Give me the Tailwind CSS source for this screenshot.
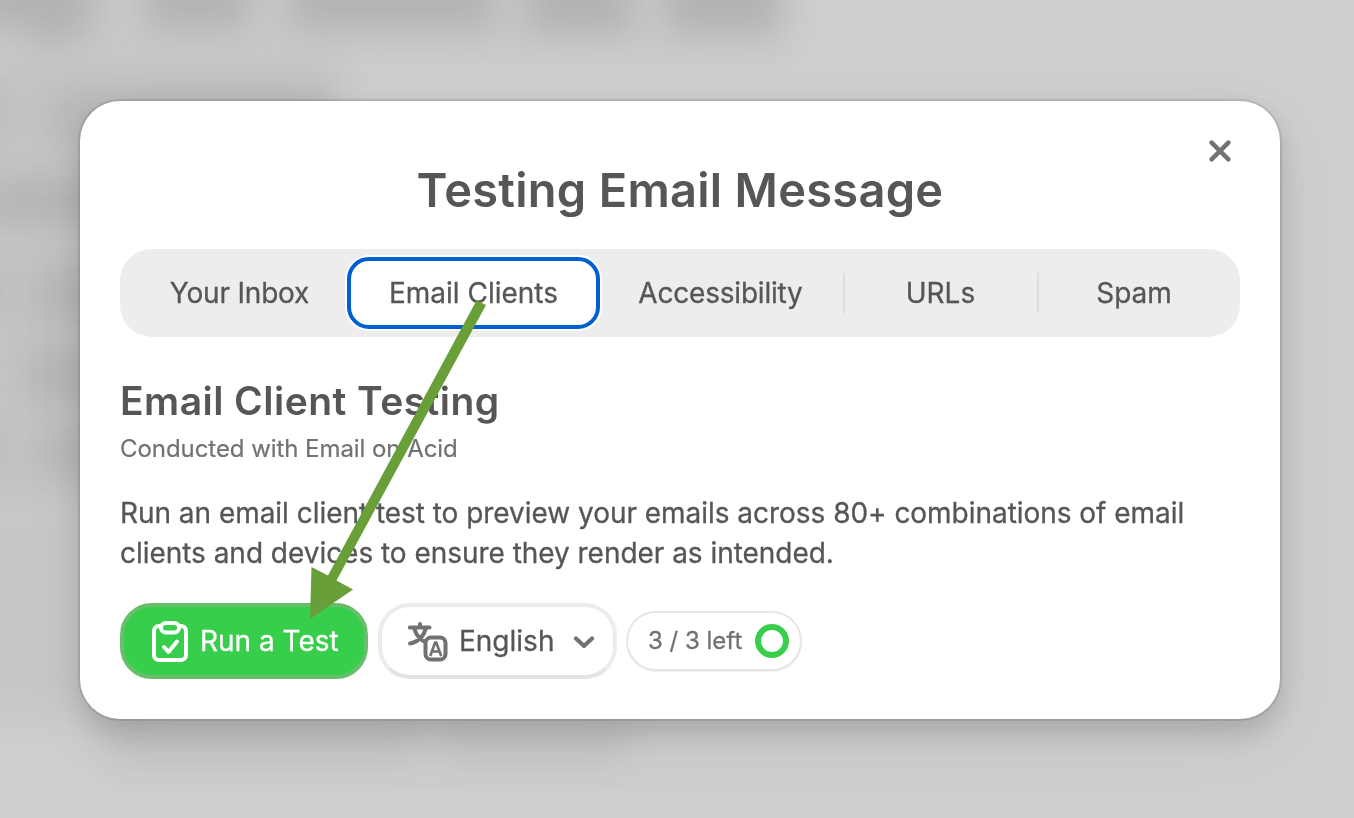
<!DOCTYPE html>
<html lang="en">
<head>
<meta charset="utf-8">
<title>Testing Email Message</title>
<script src="https://cdn.jsdelivr.net/npm/@tailwindcss/browser@4"></script>
</head>
<body class="relative h-[818px] w-[1354px] overflow-hidden bg-[#cecece] font-['Inter',sans-serif] text-[#565656]">

<!-- blurred page content behind the dialog -->
<svg class="absolute inset-0 h-full w-full" viewBox="0 0 1354 818" aria-hidden="true">
  <defs><filter id="soft" x="-20%" y="-20%" width="140%" height="140%" color-interpolation-filters="sRGB"><feGaussianBlur stdDeviation="17"/></filter></defs>
  <g filter="url(#soft)" fill="#868686" opacity=".45">
    <path d="M-60-50H95V28L50 50 20 28H-60z" opacity=".8"/>
    <rect x="146" y="-50" width="103" height="80" opacity=".8"/>
    <rect x="290" y="-50" width="205" height="80" opacity=".8"/>
    <rect x="526" y="-50" width="106" height="84" opacity=".8"/>
    <rect x="665" y="-50" width="118" height="84" opacity=".8"/>
    <rect x="-60" y="-50" width="840" height="105" opacity=".15"/>
    <rect x="-60" y="60" width="400" height="430" opacity=".3"/>
    <rect x="-60" y="480" width="200" height="240" opacity=".18"/>
    <rect x="-40" y="93" width="45" height="40" opacity=".4"/>
    <rect x="54" y="92" width="276" height="50" opacity=".6"/>
    <rect x="-20" y="182" width="160" height="38" opacity=".7"/>
    <rect x="35" y="268" width="120" height="54" opacity=".6"/>
    <rect x="-60" y="270" width="62" height="42" opacity=".5"/>
    <rect x="30" y="350" width="120" height="50" opacity=".7"/>
    <rect x="42" y="428" width="110" height="46" opacity=".6"/>
    <rect x="-50" y="428" width="55" height="36" opacity=".4"/>
    <rect x="110" y="715" width="310" height="46" opacity=".3"/>
    <rect x="440" y="715" width="185" height="46" opacity=".3"/>
  </g>
</svg>

<main class="relative px-20 pt-[101px]">
  <section class="relative flex h-[618px] w-[1200px] flex-col rounded-[40px] bg-white px-10 shadow-[0_0_0_2px_rgba(0,0,0,0.1),0_20px_70px_rgba(0,0,0,0.05),0_14px_30px_rgba(0,0,0,0.16)]">
    <button class="absolute top-[39px] right-[49px] flex size-[22px] items-center justify-center" aria-label="Close">
      <svg class="size-[22px]" viewBox="0 0 22 22" fill="none" stroke="#727272" stroke-width="4.400" stroke-linecap="round"><path d="M2.600 2.600l16.800 16.800M19.400 2.600L2.600 19.400"/></svg>
    </button>

    <h1 class="mt-[59px] text-center text-[47px] leading-[60px] font-semibold tracking-[0.28px] whitespace-nowrap">Testing Email Message</h1>

    <nav class="mt-[29px] flex h-[88px] items-center rounded-[32px] bg-[#ededed] text-[28px] leading-[40px] whitespace-nowrap [-webkit-text-stroke:0.3px]">
      <div class="flex w-[227px] justify-center pl-3 tracking-[-0.2px]">Your Inbox</div>
      <div class="flex h-[72px] w-[253px] items-center justify-center rounded-[22px] border-4 border-[#0060d0] bg-white shadow-[0_0_0_2px_#fff]">Email Clients</div>
      <div class="flex h-10 w-[245px] justify-center border-r-2 border-[#dcdcdc] pr-[2px] tracking-[-0.2px]">Accessibility</div>
      <div class="flex h-10 w-[194px] justify-center border-r-2 border-[#dcdcdc] pr-px">URLs</div>
      <div class="flex w-[190px] justify-center">Spam</div>
    </nav>

    <h2 class="mt-[40px] text-[39px] leading-[48px] font-semibold tracking-[0.46px] whitespace-nowrap">Email Client Testing</h2>
    <p class="mt-[8px] text-[24px] leading-[32px] tracking-[-0.06px] whitespace-nowrap text-[#727272] [-webkit-text-stroke:0.2px]">Conducted with Email on Acid</p>
    <p class="mt-[28px] text-[28px] leading-[40px] tracking-[-0.035px] whitespace-nowrap [-webkit-text-stroke:0.3px]">Run an email client test to preview your emails across 80+ combinations of email<br>clients and devices to ensure they render as intended.</p>

    <div class="mt-[30px] flex items-center whitespace-nowrap [-webkit-text-stroke:0.3px]">
      <button class="flex h-[76px] w-[248px] items-center rounded-[32px] border-4 border-[#67bf6c] bg-[#36ce4a] pl-[27px] text-[28px] text-white">
        <svg class="mr-[11px] h-[42px] w-[38px] shrink-0" viewBox="0 0 38 42" fill="none" stroke="#fff" stroke-width="4" stroke-linecap="round" stroke-linejoin="round">
          <path d="M9.500 6H8a5 5 0 0 0-5 5v24a5 5 0 0 0 5 5h22a5 5 0 0 0 5-5V11a5 5 0 0 0-5-5h-1.500"/>
          <rect x="10" y="3" width="18" height="9.500" rx="4.750"/>
          <path d="M13 27l4.500 5L26 21.500"/>
        </svg>
        Run a Test
      </button>
      <button class="ml-[10px] flex h-[76px] w-[239px] items-center rounded-[32px] border-4 border-[#ececec] border-b-[#e4e4e4] bg-white pl-[25px] text-[28px]">
        <svg class="mr-[10px] h-[42px] w-[42px] shrink-0" viewBox="0 0 42 42" fill="none" stroke="#727272" stroke-width="4" stroke-linecap="round" stroke-linejoin="round">
          <path d="M2.800 7.500H22.500M13 4v3.500M7.500 9c1.500 6 5 9.500 9 12M18.500 9C17 16 11 22 3 23.500"/>
          <rect x="18.500" y="17.500" width="20" height="22" rx="5.500" fill="#fff"/>
          <path stroke-width="2.600" stroke-linecap="butt" stroke-linejoin="miter" d="M23.200 36L28.100 22.500h1.200L34.200 36M25 31.500h7.500"/>
        </svg>
        English
        <svg class="ml-[19px] h-[14px] w-[22px] shrink-0" viewBox="0 0 22 14" fill="none" stroke="#727272" stroke-width="4.200" stroke-linecap="round" stroke-linejoin="round"><path d="M3 4.500l8 7.500 8-7.500"/></svg>
      </button>
      <div class="ml-[9px] flex h-[60px] w-[176px] items-center rounded-full border-2 border-[#e6e6e6] bg-white pl-5 text-[24px] text-[#727272] shadow-[0_1px_1px_rgba(0,0,0,0.06)]">
        3 / 3 left
        <i class="ml-[13px] size-[34px] shrink-0 rounded-full border-[6px] border-[#36ce4a]"></i>
      </div>
    </div>
  </section>
</main>

<!-- annotation arrow from the selected tab to the run button -->
<svg class="pointer-events-none absolute inset-0 h-full w-full" viewBox="0 0 1354 818" aria-hidden="true">
  <path fill="#689f38" d="M476.500 300.500L486 305 336.500 580.500 353 589.500 310 619 311.500 567 328 575.500z"/>
</svg>
</body>
</html>
